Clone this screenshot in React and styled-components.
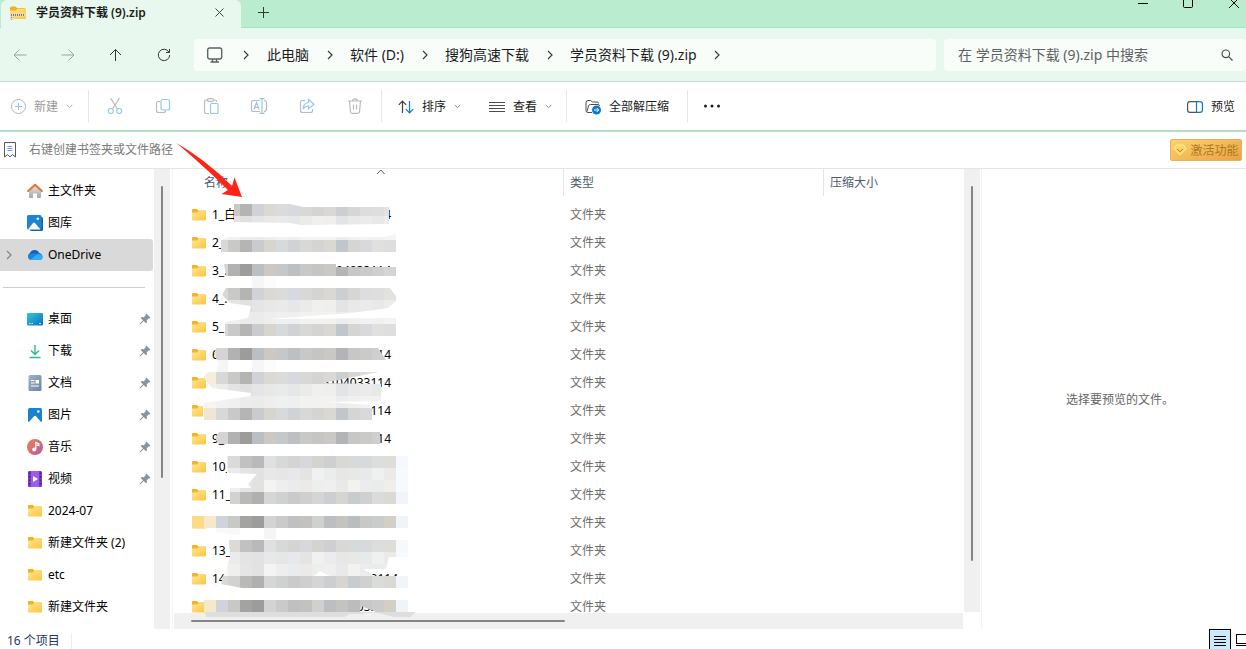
import React,{useState} from 'react'
import styled, { createGlobalStyle } from 'styled-components'

const GlobalStyle = createGlobalStyle`
*{
box-sizing: border-box;
}
body{
margin: 0;
overflow: hidden;
font-family: "Noto Sans", "Noto Sans CJK SC", sans-serif;
font-size: 12px;
color: #000000;
background-color: #ffffff;
}
button, input{
font-family: inherit;
font-size: inherit;
color: inherit;
}
svg{
display: block;
flex-shrink: 0;
}
`

const Window = styled.div`
width: 100%;
height: 100vh;
display: flex;
flex-direction: column;
overflow: hidden;
`
const PlainButton = styled.button`
display: flex;
align-items: center;
justify-content: center;
flex-shrink: 0;
padding: 0;
border: none;
background: transparent;
cursor: pointer;
white-space: nowrap;
`

// tabs
const TabBar = styled.header`
display: flex;
align-items: stretch;
height: 28px;
flex-shrink: 0;
background-color: #baedcf;
border-bottom: 1px solid #aadfc1;
`
const Tab = styled.div`
display: flex;
align-items: center;
width: 240px;
height: 28px;
margin-left: 1px;
padding: 0 14px 3px 8px;
border-radius: 6px 6px 0 0;
background-color: #e8f8ee;
`
const TabTitle = styled.span`
flex: 1;
margin-left: 9px;
font-weight: 600;
line-height: 16px;
color: #1c1c1c;
`
const NewTab = styled(PlainButton)`
width: 45px;
height: 25px;
`
const WindowControls = styled.div`
display: flex;
align-items: flex-start;
gap: 32px;
margin-left: auto;
padding-right: 6px;
`

// navigation
const NavBar = styled.nav`
display: flex;
align-items: center;
height: 54px;
flex-shrink: 0;
background-color: #e8f8ee;
border-bottom: 1px solid #c3dccd;
`
const NavButton = styled(PlainButton)`
width: 48px;
height: 32px;
color: ${(props)=> props.disabled ? "#9aa59f" : "#333735"};
`
const NavButtons = styled.div`
display: flex;
width: 194px;
padding-right: 6px;
margin-left: -4px;
margin-right: 4px;
`
const Address = styled.div`
display: flex;
align-items: center;
flex: 1;
height: 32px;
padding-left: 12px;
border-radius: 4px;
background-color: #f8fdfa;
font-size: 14px;
color: #1b1b1b;
`
const Crumb = styled.a`
color: inherit;
text-decoration: none;
line-height: 20px;
white-space: nowrap;
`
const CrumbArrow = styled.span`
display: flex;
justify-content: center;
width: 41px;
&:nth-child(2){
width: 43px;
}
`
const Search = styled.label`
display: flex;
align-items: center;
width: 302px;
height: 32px;
margin-left: 8px;
padding: 0 13px 0 14px;
border-radius: 4px;
background-color: #f8fdfa;
`
const SearchInput = styled.input`
flex: 1;
min-width: 0;
padding: 0;
border: none;
outline: none;
background: transparent;
font-size: 14px;
&::placeholder{
color: #5d625f;
opacity: 1;
}
`

// commands
const Toolbar = styled.div`
display: flex;
align-items: center;
height: 50px;
flex-shrink: 0;
padding-right: 11px;
border-bottom: 2px solid #b3dfc6;
`
const Command = styled(PlainButton)`
height: 32px;
gap: 8px;
padding: 1px ${(props)=> props.$right || 0}px 0 ${(props)=> props.$left || 0}px;
color: ${(props)=> props.disabled ? "#9b9b9b" : "#1a1a1a"};
line-height: 16px;
`
const IconCommand = styled(PlainButton)`
width: 48px;
height: 32px;
`
const IconGroup = styled.div`
display: flex;
padding: 0 2px;
`
const Separator = styled.span`
width: 1px;
height: 32px;
background-color: #e6e6e6;
`
const Spacer = styled.span`
flex: 1;
`

// bookmarks
const BookmarkBar = styled.div`
display: flex;
align-items: center;
justify-content: space-between;
height: 37px;
flex-shrink: 0;
padding: 0 4px 0 3px;
border-bottom: 1px solid #e5e5e5;
`
const BookmarkHint = styled.div`
display: flex;
align-items: center;
gap: 12px;
color: #7a7a7a;
line-height: 16px;
`
const Activate = styled(PlainButton)`
gap: 3px;
width: 72px;
height: 22px;
border: 1px solid #e5b45c;
border-radius: 2px;
background: linear-gradient(160deg, #fdd26e, #eba144);
color: #ae7a20;
`

// panes
const Main = styled.main`
position: relative;
display: flex;
flex: 1;
min-height: 0;
`
const Sidebar = styled.aside`
width: 154px;
flex-shrink: 0;
padding-top: 6px;
overflow: hidden;
`
const SideItem = styled.a`
display: flex;
align-items: center;
height: 32px;
margin-right: 1px;
padding: 0 2px 0 5px;
border-radius: 0 3px 3px 0;
background-color: ${(props)=> props.$active ? "#d9d9d9" : "transparent"};
color: #000000;
text-decoration: none;
`
const SideArrow = styled.span`
width: 22px;
`
const SideLabel = styled.span`
flex: 1;
margin-left: 5px;
line-height: 16px;
white-space: nowrap;
`
const SideRule = styled.hr`
height: 1px;
margin: 16px 9px 15px 3px;
border: none;
background-color: #cfcfcf;
`
const Track = styled.div`
width: 16px;
flex-shrink: 0;
padding: 17px 7px 0;
margin-bottom: ${(props)=> props.$bottom || 0}px;
background-color: #f0f0f0;
`
const Thumb = styled.div`
height: ${(props)=> props.$size};
border-radius: 1px;
background-color: #858585;
`
const ListPane = styled.section`
display: flex;
flex-direction: column;
flex: 1;
min-width: 0;
margin-left: 2px;
border-left: 1px solid #f3f3f3;
`
const ListBody = styled.div`
flex: 1;
min-height: 0;
margin-left: 1px;
`
const BottomTrack = styled.div`
height: 16px;
flex-shrink: 0;
margin: 0 1px 0 1px;
padding: 7px 9px 7px 17px;
background-color: #f0f0f0;
`
const BottomThumb = styled.div`
width: 49%;
height: 2px;
border-radius: 1px;
background-color: #858585;
`
const Table = styled.table`
width: 100%;
table-layout: fixed;
border-collapse: collapse;
`
const Th = styled.th`
width: ${(props)=> props.$width || "auto"};
height: 32px;
padding: 0;
vertical-align: top;
font-weight: 400;
text-align: left;
color: #4c5b70;
`
const HeadCell = styled.div`
position: relative;
height: 27px;
padding-left: ${(props)=> props.$first ? "30px" : "6px"};
border-left: ${(props)=> props.$first ? "none" : "1px solid #e5e5e5"};
line-height: 27px;
`
const SortMark = styled.span`
position: absolute;
top: 0;
left: 202px;
`
const Td = styled.td`
height: 28px;
padding: 0 0 0 7px;
line-height: 16px;
color: #6d6d6d;
`
const NameCell = styled.div`
display: flex;
align-items: center;
width: ${(props)=> props.$wide ? "217px" : "210px"};
padding-left: 10px;
color: #000000;
white-space: nowrap;
`
const NameStart = styled.span`
flex: 1;
margin-left: 5px;
`
const Marks = styled.svg`
position: absolute;
top: 0;
left: 174px;
overflow: visible;
pointer-events: none;
`
const Preview = styled.section`
display: flex;
align-items: center;
justify-content: center;
width: 265px;
flex-shrink: 0;
margin-left: 1px;
padding-left: 12px;
border-left: 1px solid #f3f3f3;
color: #666666;
`
const StatusBar = styled.footer`
display: flex;
align-items: flex-start;
height: 20px;
flex-shrink: 0;
overflow: hidden;
color: #1e395b;
`
const StatusText = styled.span`
margin: 4px 0 0 7px;
padding-right: 11px;
border-right: 1px solid #ededed;
line-height: 16px;
`
const ViewButton = styled(PlainButton)`
width: 22px;
height: 24px;
border: ${(props)=> props.$active ? "1px solid #000000" : "none"};
background-color: ${(props)=> props.$active ? "#cce8fb" : "#ffffff"};
`
const Views = styled.div`
display: flex;
width: 37px;
margin-left: auto;
gap: 4px;
overflow: hidden;
`

const Chevron = ({color="#3c3c3c"}) => (
    <svg width="8" height="10" viewBox="0 0 8 10" fill="none" stroke={color} strokeWidth="1.2"><path d="M2 1l4 4-4 4"/></svg>
)
const Down = ({color="#8a8a8a"}) => (
    <svg width="7" height="5" viewBox="0 0 7 5" fill="none" stroke={color}><path d="M.8 1l2.7 2.6L6.2 1"/></svg>
)

const FolderIcon = () => (
    <svg width="16" height="16" viewBox="0 0 16 16">
        <path d="M1 3q0-1 1-1h3.800L7.400 3.500H14q1 0 1 1V7H1z" fill="#f5b41c"/>
        <path d="M1 5.500h5L7.500 4H14q1 0 1 1v7.500q0 1-1 1H2q-1 0-1-1z" fill="url(#folder)"/>
    </svg>
)
const ZipIcon = () => (
    <svg width="18" height="16" viewBox="0 0 18 16">
        <path d="M1 3q0-1.5 1.500-1.500h4L8.300 3.300h7.200q1.500 0 1.500 1.500V8H1z" fill="#f2b01c"/>
        <path d="M1 5.500h6L8.500 4h7q1.500 0 1.500 1.200V13q0 1-1 1H2q-1 0-1-1z" fill="url(#folder)"/>
        <path d="M1 8.500h15.500v3H4V15H1z" fill="#e3dccb"/>
        <path d="M2 10h14" stroke="#857a67" strokeWidth="2" strokeDasharray="1 1"/>
        <path d="M2.500 10v4.500" stroke="#8c8370" strokeDasharray="1 1"/>
    </svg>
)
const PinIcon = () => (
    <svg width="12" height="12" viewBox="0 0 12 12" fill="#8795a3"><path d="M7.200.5l4.300 4.300-1.200.8-.7-.2-1.800 1.900.2 2-1 1-2.300-2.300L1.500 11.200l-.8.1.1-.8L4 7.200 1.700 5l1-1 2 .2 1.900-1.800-.2-.8z"/></svg>
)

const sideIcons = {
    home: <>
        <path d="M2 7.500L8 2l6 5.500V14q0 1-1 1h-3v-4.500H6V15H3q-1 0-1-1z" fill="url(#house)"/>
        <path d="M1.200 8L8 1.800 14.800 8" fill="none" stroke="#e27a35" strokeWidth="2.200" strokeLinejoin="round" strokeLinecap="round"/>
    </>,
    gallery: <>
        <rect x="3" y="2" width="13" height="14" rx="1.500" fill="#1262ad"/>
        <rect x="0" y="0" width="14.500" height="14.500" rx="1.500" fill="#1c84d4"/>
        <path d="M1 14.500l5-6.500q1-1 2 0l5.500 6.500z" fill="#ffffff"/>
        <circle cx="10.800" cy="3.700" r="1.300" fill="#ffffff"/>
    </>,
    cloud: <>
        <path d="M3.400 12.500A3.600 3.600 0 0 1 3 6a5 5 0 0 1 9.200.1 3.300 3.300 0 0 1 .6 6.400z" fill="#0f61bd"/>
        <path d="M3.400 13A3.300 3.300 0 0 1 3 7l4-.8 5.500.3a3.300 3.300 0 0 1 .4 6.500z" fill="#1786dc"/>
        <path d="M3 13l7-5.500q4-1.200 5.700 2.600.3 2.500-2.700 2.900z" fill="#35adf2"/>
    </>,
    desktop: <>
        <rect x="0" y="2" width="16" height="12.500" rx="1" fill="url(#desk)"/>
        <path d="M2 12.500h1.500M4.500 12.500H6M12 12.500h2" stroke="#b9ecff"/>
    </>,
    download: <path d="M8 2v9M4 7.500l4 4 4-4M2.500 14.500h11" fill="none" stroke="#31b795" strokeWidth="1.400"/>,
    document: <>
        <rect x="1.500" y="0" width="13" height="16" rx="1.500" fill="url(#doc)"/>
        <path d="M4 5.500h3.500M4 8h3.500M4 11h8" stroke="#ffffff" strokeWidth="1.200"/>
        <rect x="8.500" y="5" width="3.500" height="3.500" fill="#ffffff"/>
    </>,
    picture: <>
        <rect x="1" y="1" width="14" height="14" rx="1.500" fill="#1882d0"/>
        <path d="M2 15l5-5.800q1-1 2 0L14 15z" fill="#ffffff"/>
        <circle cx="11.300" cy="4.500" r="1.300" fill="#ffffff"/>
    </>,
    music: <>
        <circle cx="8" cy="8" r="8" fill="url(#tune)"/>
        <path d="M8.800 10.500V3.500l3 1.300v1.800l-2-.8" fill="none" stroke="#ffffff" strokeWidth="1.300"/>
        <circle cx="7.200" cy="10.500" r="2" fill="#ffffff"/>
    </>,
    video: <>
        <rect x="1" y="0" width="14" height="16" rx="1.500" fill="#9f5cea"/>
        <path d="M1 1.500Q1 0 2.500 0H4v16H2.500Q1 16 1 14.500zM12 0h1.500Q15 0 15 1.500v13q0 1.500-1.500 1.500H12z" fill="#7a3cc6"/>
        <path d="M2.600 1.500v14M13.400 1.500v14" stroke="#43217c" strokeWidth="1.500" strokeDasharray="1.500 2"/>
        <path d="M6 5l5 3-5 3z" fill="#ffffff"/>
    </>,
}
const SideIcon = ({name}) => {
    if(name==="folder") return <FolderIcon/>
    return <svg width="16" height="16" viewBox="0 0 16 16">{sideIcons[name]}</svg>
}

const places = [
    {label:"主文件夹",icon:"home"},
    {label:"图库",icon:"gallery"},
    {label:"OneDrive",icon:"cloud",arrow:true},
]
const quick = [
    {label:"桌面",icon:"desktop",pin:true},
    {label:"下载",icon:"download",pin:true},
    {label:"文档",icon:"document",pin:true},
    {label:"图片",icon:"picture",pin:true},
    {label:"音乐",icon:"music",pin:true},
    {label:"视频",icon:"video",pin:true},
    {label:"2024-07",icon:"folder"},
    {label:"新建文件夹 (2)",icon:"folder"},
    {label:"etc",icon:"folder"},
    {label:"新建文件夹",icon:"folder"},
]
const files = [
    ["1_白","4"],["2_",""],["3_.","04033114"],["4_.",""],["5_",""],["6_","114"],["7_","5104033114"],
    ["8_","114"],["9_","14"],["10_",""],["11_",""],["12_",""],["13_",""],["14_","1204033114"],["15_","033114"],
]
const crumbs = ["此电脑","软件 (D:)","搜狗高速下载","学员资料下载 (9).zip"]

// colours of the blurred-out name strips, 12px cells, first cell at x=192
const shades = {
    soft: "fff f5eeda d8d8d8 c9c9c8 b4b4b3 d0d2d7 dcd9d4 dadcdc d6d9dd d8d8d7 d5d4d2 dad8d4 cccfd2 d6d7d5 dcdddf dedede e4e2df fff",
    mid: "fff efe7d3 d8d8d8 c9c9c7 b5b5b4 c9cbce d8d4ce d6dada cfd3d6 d8d8d7 d5d4d2 dad8d3 c1c6ca d5d5d3 d8d9dc e0e0df dedede fff",
    dark: "fff f5e6c8 d4d4d4 b2b2b1 9c9c9b bbbfc3 cec8c2 c5c8c9 bcc0c3 c8c8c7 c6c5c4 c9c8c4 b2b4b8 c7c7c6 cacac9 cfcfcf d4d4d4 fff",
    light: "fff f4f0e6 ececec e4e4e4 e0e0e0 e4e5e6 e8e8e7 e9ebeb e6e7e9 ebebea f0f0ee efefed e2e4e6 e8e9e8 ebebec e8e8e6 ececeb fff",
    pale: "fff f7f5ee f2f2f2 f0f0f0 ececec ebebec eeeeee f0f0f0 efeff0 f2f2f1 f2f2f0 f2f2f1 ededee f0f0f0 f2f2f2 f1f1f1 f4f4f4 fff",
    cool: "fff fff eee dadad9 c1c1c1 b9b9b9 dfe0e3 d7d9d8 d4d4d3 d6d8dc d5d3d0 cfcfd3 d8d8d5 d5dbdb d8d9dc dbdedc deddd8 f5f9fd",
    coolLight: "fff fff f4f6f5 ebebeb e4e4e4 e2e2e3 e8e8e8 e6e6e6 e7e8eb e5e4e3 f0f1f0 ebecec e7e7e8 e8e8e7 e7eaeb eef1ef ebeae8 f6faff",
    coolPale: "fff fff f8f8f8 efefee e5e5e5 e2e2e2 f4f4f3 eeeeee eaebed ebeae8 edefef eeefee e9e9ea f2f2ef ececee e9eceb f0eeeb f6faff",
    coolDark: "fff fff d9d9d9 d2d2d1 b9b9b8 b0b0af d5d7d7 cfd0d0 cacaca cfcfcd d4d6d6 cdced1 d6d5d2 c7ccce d0d0d0 dadcda dbd9d3 f1f5f9",
    warm: "fcdc82 f6e8cb cfd4dc c8c8c7 a3a3a2 9c9c9b d2d4d3 cacaca bfc1c1 c3c2be cfd1cf bdbec1 c5c3bf b9bdc0 c8c8c6 c9cccb d3cec6 eff4f9",
    faint: "fff fff fbf9f7 f7f9f8 fff fff f5f5f5 fff fff fff fff fff fff fff fff fff fff fff",
    haze: "fff fff f5f5f5 fff fff f6f6f8 fcfcfc fff fff fff fff fff fff fff fff fff fff fff",
}
const strips = [
    {shape:"234,204 290,204 303,207 389,207 389,224 301,225 290,223 234,222",rows:[[204,"soft"],[216,"light"]]},
    {shape:"221,240 228,237 384,237 396,234 396,252 221,252",rows:[[228,"pale"],[240,"mid"]]},
    {shape:"224,264 336,264 336,267 396,267 396,276 276,276 276,288 252,288 252,276 226,276",rows:[[264,"dark"],[276,"haze"]]},
    {shape:"226,288 390,288 396,296 396,301 388,308 352,313 268,319 396,318 396,336 225,336 225,322 248,318 251,306 230,303 222,295",rows:[[288,"soft"],[300,"light"],[312,"pale"],[324,"mid"]]},
    {shape:"216,348 378,348 386,360 276,360 276,372 379,372 323,383 381,384 381,401 328,402 372,405 372,420 203,420 203,403 251,396 251,393 212,388 203,377 208,372 216,372 219,363 214,355",rows:[[348,"dark"],[360,"haze"],[372,"soft"],[384,"light"],[396,"pale"],[408,"mid"]]},
    {shape:"219,432 380,432 380,444 219,444 215,438",rows:[[432,"dark"]]},
    {shape:"227,456 408,456 408,504 230,504 230,488 251,488 248,484 257,474 227,473",rows:[[456,"cool"],[468,"coolLight"],[480,"coolPale"],[492,"coolDark"]]},
    {shape:"192,516 408,516 408,528 276,528 276,540 216,532 216,528 192,528",rows:[[516,"warm"],[528,"faint"]]},
    {shape:"229,540 408,540 408,557 389,557 386,569 363,569 375,576 330,576 320,571 314,576 223,576 227,566 230,557",rows:[[540,"cool"],[552,"coolLight"],[564,"coolPale"]]},
    {shape:"223,576 408,576 408,588 242,588 221,584",rows:[[576,"coolDark"]]},
    {shape:"204,600 408,600 408,612 376,612 361,606 360,612 204,612",rows:[[600,"warm"]]},
]

const NameMarks = () => (
    <Marks width="250" height="460" viewBox="174 169 250 460" shapeRendering="crispEdges" aria-hidden="true">
        {strips.map((strip,i)=> (
            <g key={i} clipPath={`url(#strip${i})`}>
                <clipPath id={`strip${i}`}><polygon points={strip.shape}/></clipPath>
                {strip.rows.map(([y,shade])=> shades[shade].split(" ").map((color,x)=> (
                    <rect key={y+"-"+x} x={192+x*12} y={y} width="12" height="12" fill={"#"+color}/>
                )))}
            </g>
        ))}
        <path d="M205 612H415L410 617H394L378 613 350 614 344 617H206z" fill="#dedede"/>
        <path d="M176.500 143Q206 160 232 186L234.500 177.500 242 197 221.500 194 228 190Q207 169 176.500 143z" fill="#ff2415" shapeRendering="auto"/>
    </Marks>
)

const Gradients = () => (
    <svg width="0" height="0" style={{position:"absolute"}} aria-hidden="true">
        <defs>
            <linearGradient id="folder" x1="0" y1="0" x2="1" y2="1"><stop stopColor="#ffe59a"/><stop offset="1" stopColor="#fdc638"/></linearGradient>
            <linearGradient id="house" x1="0" y1="0" x2="0" y2="1"><stop stopColor="#e3e3e3"/><stop offset="1" stopColor="#a8a8a8"/></linearGradient>
            <linearGradient id="desk" x1="0" y1="0" x2="1" y2="1"><stop stopColor="#2fc9dc"/><stop offset="1" stopColor="#0f6dbd"/></linearGradient>
            <linearGradient id="doc" x1="0" y1="0" x2="1" y2="1"><stop stopColor="#a3b6cb"/><stop offset="1" stopColor="#6883a3"/></linearGradient>
            <linearGradient id="tune" x1="0" y1="0" x2="1" y2="1"><stop stopColor="#ee8252"/><stop offset="1" stopColor="#b25a9c"/></linearGradient>
        </defs>
    </svg>
)

const App = () => {
    const [search, setsearch] = useState("")
    const [active, setactive] = useState("OneDrive")

    const sideItem = (item) => (
        <SideItem key={item.label} href="#" $active={active===item.label} onClick={()=> setactive(item.label)}>
            <SideArrow>{item.arrow && <Chevron color="#858585"/>}</SideArrow>
            <SideIcon name={item.icon}/>
            <SideLabel>{item.label}</SideLabel>
            {item.pin && <PinIcon/>}
        </SideItem>
    )

    return (
        <Window>
            <GlobalStyle/>
            <Gradients/>
            <TabBar>
                <Tab>
                    <ZipIcon/>
                    <TabTitle>学员资料下载 (9).zip</TabTitle>
                    <PlainButton aria-label="关闭标签页">
                        <svg width="14" height="12" viewBox="0 0 14 12" stroke="#444" fill="none"><path d="M2.500 1.500l8 8M10.500 1.500l-8 8"/></svg>
                    </PlainButton>
                </Tab>
                <NewTab aria-label="新标签页">
                    <svg width="11" height="11" viewBox="0 0 11 11" stroke="#2d3a33"><path d="M5.500 0v11M0 5.500h11"/></svg>
                </NewTab>
                <WindowControls>
                    <PlainButton aria-label="最小化"><svg width="14" height="8" viewBox="0 0 14 8" stroke="#000"><path d="M2 3.500h10"/></svg></PlainButton>
                    <PlainButton aria-label="最大化"><svg width="14" height="9" viewBox="0 0 14 9" stroke="#000" fill="none"><rect x="1.500" y="-2.500" width="9" height="10" rx="1"/></svg></PlainButton>
                    <PlainButton aria-label="关闭"><svg width="12" height="9" viewBox="0 0 12 9" stroke="#000"><path d="M1 -2l10 10M11 -2L1 8"/></svg></PlainButton>
                </WindowControls>
            </TabBar>

            <NavBar>
                <NavButtons>
                    <NavButton disabled aria-label="后退"><svg width="14" height="12" viewBox="0 0 14 12" fill="none" stroke="currentColor"><path d="M13.500 6H1M6.500 .5L1 6l5.500 5.500"/></svg></NavButton>
                    <NavButton disabled aria-label="前进"><svg width="14" height="12" viewBox="0 0 14 12" fill="none" stroke="currentColor"><path d="M.5 6H13M7.500 .5L13 6l-5.500 5.500"/></svg></NavButton>
                    <NavButton aria-label="向上"><svg width="14" height="14" viewBox="0 0 14 14" fill="none" stroke="currentColor"><path d="M6.500 13V1.500M1 7L6.500 1.500 12 7"/></svg></NavButton>
                    <NavButton aria-label="刷新"><svg width="14" height="14" viewBox="0 0 14 14" fill="none" stroke="currentColor"><path d="M12 4.200A5.700 5.700 0 1 0 12.700 7M12.500 1v3.500H9"/></svg></NavButton>
                </NavButtons>
                <Address>
                    <svg width="18" height="16" viewBox="0 0 18 16" fill="none" stroke="#5e6361" strokeWidth="1.400"><rect x="1.700" y="1" width="14" height="11" rx="2"/><path d="M6.500 12v3M10.500 12v3M4.500 15h8.500"/></svg>
                    {crumbs.map((crumb)=> (
                        <React.Fragment key={crumb}>
                            <CrumbArrow><Chevron/></CrumbArrow>
                            <Crumb href="#">{crumb}</Crumb>
                        </React.Fragment>
                    ))}
                    <CrumbArrow><Chevron/></CrumbArrow>
                </Address>
                <Search>
                    <SearchInput aria-label="搜索" placeholder="在 学员资料下载 (9).zip 中搜索" value={search} onChange={(e)=> setsearch(e.target.value)}/>
                    <svg width="12" height="12" viewBox="0 0 12 12" fill="none" stroke="#4c514e" strokeWidth="1.200"><circle cx="4.800" cy="4.800" r="3.800"/><path d="M7.600 7.600L11.500 11.500"/></svg>
                </Search>
            </NavBar>

            <Toolbar>
                <Command disabled $left={11} $right={15}>
                    <svg width="15" height="15" viewBox="0 0 15 15" fill="none" stroke="#b5b5b5"><circle cx="7.500" cy="7.500" r="7"/><path d="M7.500 4v7M4 7.500h7" stroke="#8fc5ec"/></svg>
                    新建
                    <Down color="#b0b0b0"/>
                </Command>
                <Separator/>
                <IconGroup>
                    <IconCommand disabled aria-label="剪切"><svg width="16" height="16" viewBox="0 0 16 16" fill="none" stroke="#bbb" strokeWidth="1.200"><path d="M3.500 0l6.700 10.800M12.500 0L5.800 10.800"/><g stroke="#93c8ee"><circle cx="3.800" cy="13" r="2.500"/><circle cx="12.200" cy="13" r="2.500"/></g></svg></IconCommand>
                    <IconCommand disabled aria-label="复制"><svg width="16" height="16" viewBox="0 0 16 16" fill="none" stroke="#bbb" strokeWidth="1.200"><path d="M5 3.500H3.500Q1.500 3.500 1.500 5.500v7q0 2 2 2h5q2 0 2-2"/><rect x="6" y="1.500" width="8.500" height="10.500" rx="2" stroke="#93c8ee"/></svg></IconCommand>
                    <IconCommand disabled aria-label="粘贴"><svg width="16" height="16" viewBox="0 0 16 16" fill="none" stroke="#bbb" strokeWidth="1.200"><path d="M6 15.500H3Q1.500 15.500 1.500 14V3.500Q1.500 2 3 2h1.500M10.500 2H12q1.500 0 1.500 1.500V4"/><rect x="4.500" y=".6" width="6" height="2.800" rx="1.200"/><rect x="7.500" y="5.500" width="7.500" height="10" rx="1" stroke="#93c8ee"/></svg></IconCommand>
                    <IconCommand disabled aria-label="重命名"><svg width="18" height="16" viewBox="0 0 18 16" fill="none" stroke="#bbb" strokeWidth="1.200"><path d="M10 2.500H3.500q-2 0-2 2v7q0 2 2 2H10M14 2.500q2.500 0 2.500 2.500v6q0 2.500-2.500 2.500"/><path d="M4 11.500L6.500 4.500 9 11.500M4.800 9.300h3.400M12 1v14M9.500 .7h5M9.500 15.300h5" stroke="#93c8ee"/></svg></IconCommand>
                    <IconCommand disabled aria-label="共享"><svg width="16" height="16" viewBox="0 0 16 16" fill="none" stroke="#bbb" strokeWidth="1.200"><path d="M6 2.500H3.500q-2 0-2 2v8q0 2 2 2h8q2 0 2-2V11"/><path d="M9.500 1.500l5.500 4.700-5.500 4.600V8Q6 8 4 11 4.500 5 9.500 4.500z" stroke="#93c8ee"/></svg></IconCommand>
                    <IconCommand disabled aria-label="删除"><svg width="16" height="16" viewBox="0 0 16 16" fill="none" stroke="#bbb" strokeWidth="1.200"><path d="M1 3h14M5.500 3Q5.500 .8 8 .8T10.500 3M2.500 3l1 11q.2 1.300 1.500 1.300h6q1.300 0 1.500-1.300l1-11M6.500 6.500v5M9.500 6.500v5"/></svg></IconCommand>
                </IconGroup>
                <Separator/>
                <Command $left={16} $right={12}>
                    <svg width="16" height="14" viewBox="0 0 16 14" fill="none" strokeWidth="1.200"><path d="M4.500 13V1M.8 4.800L4.500 1l3.700 3.800" stroke="#404040"/><path d="M11.500 1v12M7.800 9.200l3.700 3.800 3.700-3.800" stroke="#0c79cf"/></svg>
                    排序
                    <Down/>
                </Command>
                <Command $left={16} $right={14}>
                    <svg width="16" height="12" viewBox="0 0 16 12" stroke="#4c4c4c"><path d="M0 1.500h16M0 4.500h16M0 7.500h16M0 10.500h16"/></svg>
                    查看
                    <Down/>
                </Command>
                <Separator/>
                <Command $left={18} $right={18}>
                    <svg width="16" height="16" viewBox="0 0 16 16" fill="none">
                        <path d="M7 13.500H3q-2 0-2-2v-8q0-2 2-2h2.500L7.500 3H12q1.500 0 1.500 1.500M2 12.500L3.500 7q.4-1.500 2-1.500H13q1.500 0 1.500 1.500" stroke="#4d4d4d"/>
                        <circle cx="11.500" cy="11" r="4.500" fill="#0c79d3"/><path d="M9 11h4.500M11.700 9l2 2-2 2" stroke="#fff"/>
                    </svg>
                    全部解压缩
                </Command>
                <Separator/>
                <IconCommand aria-label="更多"><svg width="18" height="4" viewBox="0 0 18 4" fill="#1b1b1b"><circle cx="2.500" cy="2" r="1.500"/><circle cx="9" cy="2" r="1.500"/><circle cx="15.500" cy="2" r="1.500"/></svg></IconCommand>
                <Spacer/>
                <Command>
                    <svg width="16" height="12" viewBox="0 0 16 12" fill="none" strokeWidth="1.200"><path d="M9.500 .6H3Q.6 .6 .6 3v6q0 2.400 2.400 2.400h6.500" stroke="#555"/><path d="M9.500 .6H13q2.400 0 2.400 2.400v6q0 2.400-2.400 2.400H9.500z" stroke="#0c79cf"/></svg>
                    预览
                </Command>
            </Toolbar>

            <BookmarkBar>
                <BookmarkHint>
                    <svg width="14" height="16" viewBox="0 0 14 16" fill="none" stroke="#555b63"><path d="M1.500 .5h11v14.500L9.500 12.700 7 14.800 4.500 12.700 1.500 15z"/><path d="M4.500 4.500H9M4.500 6.500h5M4.500 8.500h5" stroke="#6f97f2"/></svg>
                    右键创建书签夹或文件路径
                </BookmarkHint>
                <Activate>
                    <svg width="14" height="12" viewBox="0 0 14 12" fill="#fbd765" stroke="#fff0a0"><path d="M3.500 1h7L13 4.500 7 11 1 4.500z"/><path d="M4 5l3 2.700L10 5" stroke="#bc811f" fill="none"/></svg>
                    激活功能
                </Activate>
            </BookmarkBar>

            <Main>
                <Sidebar>
                    {places.map(sideItem)}
                    <SideRule/>
                    {quick.map(sideItem)}
                </Sidebar>
                <Track><Thumb $size="66%"/></Track>
                <ListPane>
                    <ListBody>
                        <Table>
                            <thead>
                                <tr>
                                    <Th $width="389px"><HeadCell $first><SortMark><svg width="10" height="6" viewBox="0 0 10 6" fill="none" stroke="#555"><path d="M1 5l3.800-4L8.600 5"/></svg></SortMark>名称</HeadCell></Th>
                                    <Th $width="260px"><HeadCell>类型</HeadCell></Th>
                                    <Th><HeadCell>压缩大小</HeadCell></Th>
                                </tr>
                            </thead>
                            <tbody>
                                {files.map(([start,end],i)=> (
                                    <tr key={start}>
                                        <Td><NameCell $wide={i>8}><FolderIcon/><NameStart>{start}</NameStart>{end}</NameCell></Td>
                                        <Td>文件夹</Td>
                                        <Td/>
                                    </tr>
                                ))}
                            </tbody>
                        </Table>
                    </ListBody>
                    <BottomTrack><BottomThumb/></BottomTrack>
                </ListPane>
                <Track $bottom={17}><Thumb $size="88%"/></Track>
                <Preview>选择要预览的文件。</Preview>
                <NameMarks/>
            </Main>

            <StatusBar>
                <StatusText>16 个项目</StatusText>
                <Views>
                    <ViewButton $active aria-label="详细信息"><svg width="12" height="12" viewBox="0 0 12 12" stroke="#000"><path d="M0 1.500h12M0 4.500h12M0 7.500h12M0 10.500h12"/></svg></ViewButton>
                    <ViewButton aria-label="大图标"><svg width="22" height="24" viewBox="0 0 22 24" fill="none" stroke="#000"><rect x="1.500" y="5.500" width="17" height="9"/><path d="M1 16.500h18"/></svg></ViewButton>
                </Views>
            </StatusBar>
        </Window>
    )
}

export default App
